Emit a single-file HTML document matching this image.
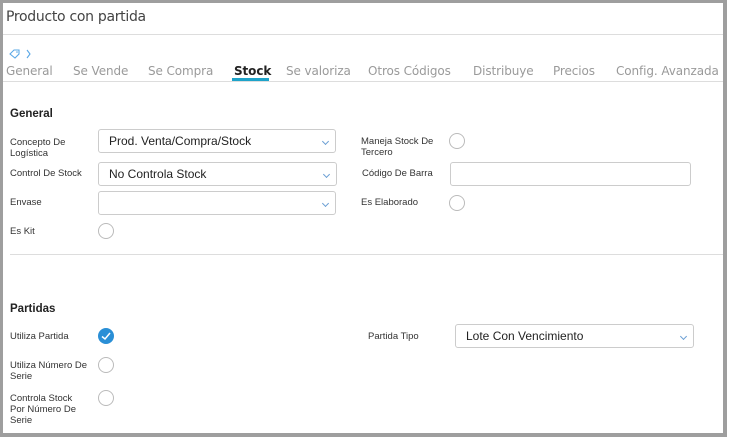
<!DOCTYPE html>
<html><head><meta charset="utf-8"><style>
*{margin:0;padding:0;box-sizing:border-box}
body{width:729px;height:438px;background:#fff;position:relative;overflow:hidden;font-family:"Liberation Sans",sans-serif;color:#333}
.frame{position:absolute;left:0;top:0;width:727px;height:437px;border:3px solid #9e9e9e;border-right-width:4px;border-bottom-width:4px;overflow:hidden}
.a{position:absolute}
.title{left:3px;top:6px;color:#444;font-family:"DejaVu Sans","Liberation Sans",sans-serif;font-size:14px;letter-spacing:-0.3px}
.hl{left:0;width:730px;height:1px;background:#ddd}
.tab{top:61px;color:#9a9a9a;font-family:"DejaVu Sans","Liberation Sans",sans-serif;font-size:12px;letter-spacing:-0.1px;white-space:nowrap}
.lbl{font-size:9.5px;color:#333;line-height:11px}
h4{position:absolute;font-size:11.5px;font-weight:bold;color:#222}
.sel{position:absolute;height:24px;border:1px solid #ccc;border-radius:3px;font-size:12px;padding:4px 0 0 10px;color:#222}
.sel:after{content:"";position:absolute;right:7px;top:9px;width:4px;height:4px;border-right:1px solid #6a9fd4;border-bottom:1px solid #6a9fd4;transform:rotate(45deg)}
.rad{position:absolute;width:16px;height:16px;border:1px solid #bbb;border-radius:50%}
</style></head><body>
<div class="frame">
<div class="a title">Producto con partida</div>
<div class="a hl" style="top:31px"></div>
<svg class="a" style="left:5px;top:45px" width="30" height="12" viewBox="0 0 30 12"><path d="M2 6 L6 2 L11 2 L11 6 L7 10 Z" fill="none" stroke="#5aa8e6" stroke-width="1.1"/><circle cx="9" cy="4" r="0.8" fill="#5aa8e6"/><path d="M19 2 L22 6 L19 10" fill="none" stroke="#5aa8e6" stroke-width="1.1"/></svg>
<div class="a tab" style="left:3px">General</div>
<div class="a tab" style="left:70px">Se Vende</div>
<div class="a tab" style="left:145px">Se Compra</div>
<div class="a tab" style="left:231px;color:#222;font-weight:bold">Stock</div>
<div class="a" style="left:229px;top:75px;width:37px;height:3px;background:#1ea3c9"></div>
<div class="a tab" style="left:283px">Se valoriza</div>
<div class="a tab" style="left:365px">Otros Códigos</div>
<div class="a tab" style="left:470px">Distribuye</div>
<div class="a tab" style="left:550px">Precios</div>
<div class="a tab" style="left:613px">Config. Avanzada</div>
<div class="a hl" style="top:78px"></div>

<h4 style="left:7px;top:105px">General</h4>
<div class="a lbl" style="left:7px;top:134px">Concepto De<br>Logística</div>
<div class="sel" style="left:95px;top:126px;width:238px">Prod. Venta/Compra/Stock</div>
<div class="a lbl" style="left:7px;top:165px">Control De Stock</div>
<div class="sel" style="left:95px;top:159px;width:239px">No Controla Stock</div>
<div class="a lbl" style="left:7px;top:194px">Envase</div>
<div class="sel" style="left:95px;top:188px;width:238px"></div>
<div class="a lbl" style="left:7px;top:223px">Es Kit</div>
<div class="rad" style="left:95px;top:220px"></div>

<div class="a lbl" style="left:358px;top:133px">Maneja Stock De<br>Tercero</div>
<div class="rad" style="left:446px;top:130px"></div>
<div class="a lbl" style="left:359px;top:165px">Código De Barra</div>
<div class="a" style="left:447px;top:159px;width:241px;height:24px;border:1px solid #ccc;border-radius:3px"></div>
<div class="a lbl" style="left:358px;top:194px">Es Elaborado</div>
<div class="rad" style="left:446px;top:192px"></div>

<div class="a hl" style="top:251px;left:7px;width:720px"></div>

<h4 style="left:7px;top:300px">Partidas</h4>
<div class="a lbl" style="left:7px;top:328px">Utiliza Partida</div>
<div class="a" style="left:95px;top:325px;width:16px;height:16px;border-radius:50%;background:#2a8fd6"><svg width="16" height="16"><path d="M4 8.5 L7 11 L12 5" fill="none" stroke="#fff" stroke-width="1.5"/></svg></div>
<div class="a lbl" style="left:7px;top:357px">Utiliza Número De<br>Serie</div>
<div class="rad" style="left:95px;top:354px"></div>
<div class="a lbl" style="left:7px;top:390px">Controla Stock<br>Por Número De<br>Serie</div>
<div class="rad" style="left:95px;top:387px"></div>

<div class="a lbl" style="left:365px;top:328px">Partida Tipo</div>
<div class="sel" style="left:452px;top:321px;width:239px">Lote Con Vencimiento</div>
</div>
</body></html>
